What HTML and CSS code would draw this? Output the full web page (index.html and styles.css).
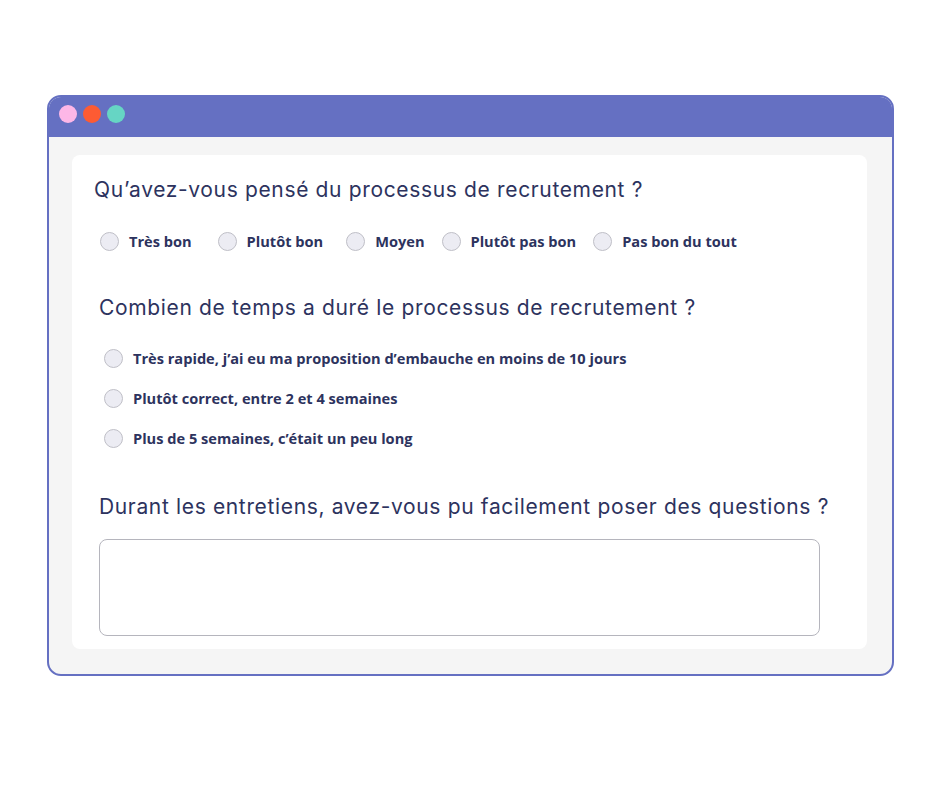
FILE: index.html
```html
<!DOCTYPE html>
<html lang="fr">
<head>
  <meta charset="UTF-8" />
  <meta name="viewport" content="width=device-width, initial-scale=1.0"/>
  <title>Questionnaire candidat</title>
  <link rel="stylesheet" href="styles.css">
</head>
<body>
  <div class="window">
    <div class="titlebar">
      <span class="dot pink"></span>
      <span class="dot red"></span>
      <span class="dot teal"></span>
    </div>
    <div class="content">
      <form class="card">
        <h2 class="question first">Qu’avez-vous pensé du processus de recrutement ?</h2>
        <div class="inline-options">
          <label class="option"><span class="radio"></span>Très bon</label>
          <label class="option"><span class="radio"></span>Plutôt bon</label>
          <label class="option"><span class="radio"></span>Moyen</label>
          <label class="option"><span class="radio"></span>Plutôt pas bon</label>
          <label class="option"><span class="radio"></span>Pas bon du tout</label>
        </div>

        <h2 class="question second">Combien de temps a duré le processus de recrutement ?</h2>
        <div class="stacked-options">
          <label class="option"><span class="radio"></span>Très rapide, j’ai eu ma proposition d’embauche en moins de 10 jours</label>
          <label class="option"><span class="radio"></span>Plutôt correct, entre 2 et 4 semaines</label>
          <label class="option"><span class="radio"></span>Plus de 5 semaines, c’était un peu long</label>
        </div>

        <h2 class="question third">Durant les entretiens, avez-vous pu facilement poser des questions ?</h2>
        <div class="answer"></div>
      </form>
    </div>
  </div>
</body>
</html>
```

FILE: styles.css
```css
* {
  margin: 0;
  padding: 0;
  box-sizing: border-box;
}

body {
  background: #ffffff;
  padding: 95px 0 0 47px;
  color: #2d335e;
}

.window {
  width: 847px;
  height: 581px;
  border: 2px solid #6570c2;
  border-radius: 14px;
  background: #f5f5f5;
  overflow: hidden;
}

.titlebar {
  height: 40px;
  background: #6570c2;
  display: flex;
  gap: 6px;
  padding: 8px 0 0 10px;
}

.dot {
  width: 18px;
  height: 18px;
  border-radius: 50%;
}

.pink { background: #fdb7e7; }
.red { background: #fd5b33; }
.teal { background: #66d5c4; }

.content {
  padding: 18px 25px 25px 23px;
}

.card {
  background: #ffffff;
  border-radius: 8px;
  height: 494px;
  padding: 21px 20px 0 22px;
}

.question {
  font-family: 'Inter', sans-serif;
  font-weight: 400;
  font-size: 21px;
  letter-spacing: 0.65px;
  line-height: 28px;
  white-space: nowrap;
  color: #2d335e;
}

.question.second {
  margin: 43px 0 0 5px;
}

.question.third {
  margin: 45px 0 0 5px;
}

.option {
  display: flex;
  align-items: center;
  gap: 10px;
  height: 20px;
  font-family: 'Open Sans', sans-serif;
  font-weight: 700;
  font-size: 14.6px;
  color: #2d335e;
}

.radio {
  width: 19px;
  height: 19px;
  border-radius: 50%;
  background: #ececf3;
  border: 1px solid #bfbfc7;
  flex-shrink: 0;
}

.inline-options {
  display: flex;
  gap: 17px;
  margin: 27px 0 0 6px;
}

.inline-options .option:nth-child(1) {
  margin-right: 9px;
}

.inline-options .option:nth-child(2) {
  margin-right: 6px;
}

.stacked-options {
  display: flex;
  flex-direction: column;
  gap: 20px;
  margin: 26px 0 0 10px;
}

.answer {
  margin: 18px 0 0 5px;
  width: 721px;
  height: 97px;
  border: 1px solid #b5b5bd;
  border-radius: 8px;
  background: #ffffff;
}
```
